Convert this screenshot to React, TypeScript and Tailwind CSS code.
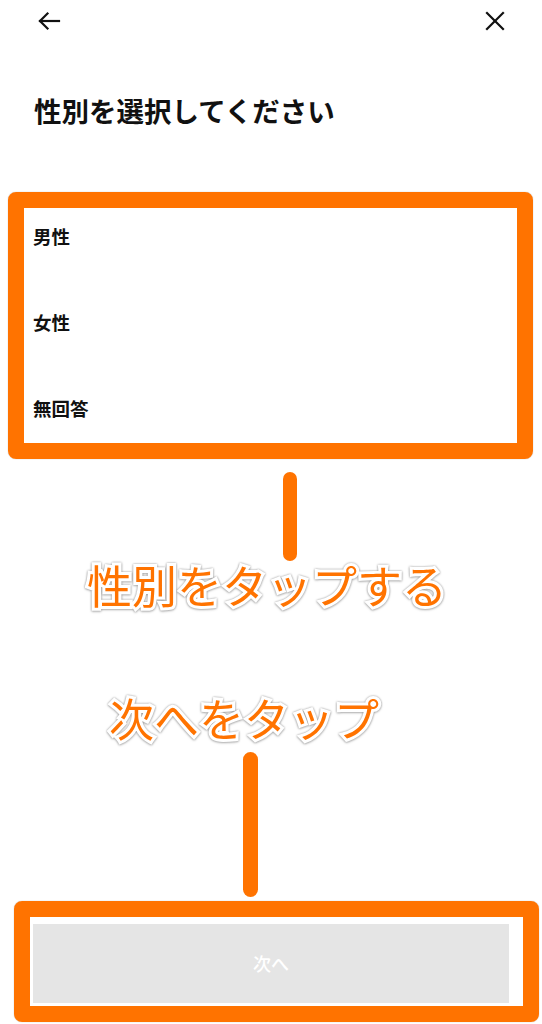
import React from "react";

const FONT = { fontFamily: '"Noto Sans CJK JP", "Noto Sans", sans-serif' };

function BackArrow() {
  return (
    <svg width="24" height="20" viewBox="0 0 24 20" fill="none" stroke="#111" strokeWidth="2.2" strokeLinecap="square">
      <path d="M3 10 H22" />
      <path d="M10.5 2.5 L3 10 L10.5 17.5" />
    </svg>
  );
}

function CloseIcon() {
  return (
    <svg width="20" height="20" viewBox="0 0 20 20" fill="none" stroke="#111" strokeWidth="2.2" strokeLinecap="square">
      <path d="M2 2 L18 18" />
      <path d="M18 2 L2 18" />
    </svg>
  );
}

export default function App() {
  const annText =
    "absolute whitespace-nowrap text-[45px] leading-none font-normal text-[#ff7300] [paint-order:stroke_fill] [-webkit-text-stroke:6px_white] [filter:drop-shadow(0_0_1px_rgba(0,0,0,0.35))_drop-shadow(0_1px_1px_rgba(0,0,0,0.2))]";
  return (
    <div className="relative w-full h-[1024px] overflow-hidden bg-white flex flex-col" style={FONT}>
      {/* header */}
      <div className="h-[42px] flex items-center justify-between pl-[37px] pr-[37px]">
        <BackArrow />
        <CloseIcon />
      </div>

      {/* title */}
      <h1 className="mt-[55px] pl-[34px] text-[27.5px] leading-none font-bold text-[#111]">
        性別を選択してください
      </h1>

      {/* options */}
      <div className="mt-[69px] flex flex-col">
        {["男性", "女性", "無回答"].map((t) => (
          <div key={t} className="h-[86px] flex items-center pl-[33px] text-[18.5px] leading-none font-bold text-[#111]">
            {t}
          </div>
        ))}
      </div>

      <div className="flex-1" />

      {/* next button */}
      <div className="mx-[33px] mb-[21px] h-[79px] bg-[#e5e5e5] flex items-center justify-center text-[18px] font-medium text-white">
        次へ
      </div>

      {/* annotations */}
      <div className="absolute left-[8px] top-[192px] w-[525px] h-[267px] border-[16px] border-[#ff7300] rounded-[8px] shadow-[0_0_1px_rgba(0,0,0,0.4)]" />
      <div className="absolute left-[283px] top-[472px] w-[14px] h-[89px] rounded-full bg-[#ff7300]" />
      <div className={annText + " left-[87px] top-[562px]"}>性別をタップする</div>
      <div className={annText + " left-[109px] top-[695px]"}>次へをタップ</div>
      <div className="absolute left-[243px] top-[752px] w-[15px] h-[145px] rounded-full bg-[#ff7300]" />
      <div className="absolute left-[14px] top-[901px] w-[525px] h-[121px] border-[16px] border-[#ff7300] rounded-[8px] shadow-[0_0_1px_rgba(0,0,0,0.4)]" />
    </div>
  );
}
